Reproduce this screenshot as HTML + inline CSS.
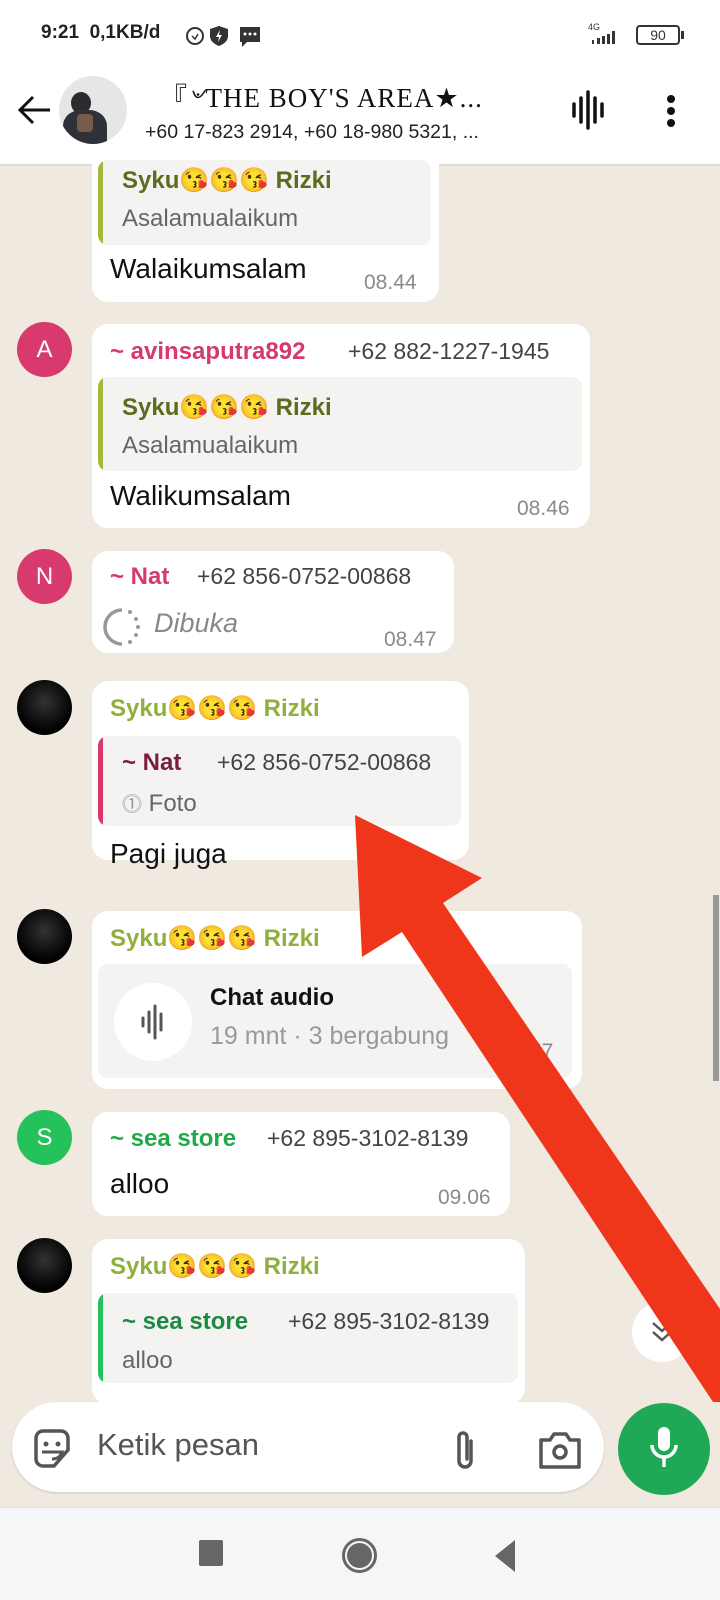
<!DOCTYPE html>
<html><head><meta charset="utf-8"><style>
*{margin:0;padding:0;box-sizing:border-box}
body{width:720px;height:1600px;position:relative;overflow:hidden;background:#efe9e0;font-family:"Liberation Sans","Noto Sans CJK SC",sans-serif;color:#111}
.a{position:absolute}
.b{position:absolute;background:#fff;border-radius:16px}
.q{position:absolute;background:#f5f3f1;border-radius:10px;overflow:hidden}
.q:before{content:"";position:absolute;left:0;top:0;bottom:0;width:5px;background:var(--c)}
.t{position:absolute;font-size:21px;color:#8a8a8a;white-space:nowrap}
.n{position:absolute;font-size:24px;white-space:nowrap}
.av{position:absolute;width:55px;height:55px;border-radius:50%;color:#fff;font-size:24px;text-align:center;line-height:55px}
.dk{background:radial-gradient(circle at 50% 40%,#333 0,#111 45%,#000 70%)}
.m{position:absolute;font-size:28px;white-space:nowrap}
.g{color:#8fb03c}
</style></head><body>
<!-- status bar -->
<div class="a" style="left:0;top:0;width:720px;height:165px;background:#fff"></div>
<div class="a" style="left:41px;top:22px;font-size:19px;font-weight:bold;color:#222">9:21&nbsp; 0,1KB/d</div>
<svg class="a" style="left:183px;top:22px" width="100" height="26"><circle cx="12" cy="14" r="8" fill="none" stroke="#333" stroke-width="2"/><path d="M9 14l3 3 3-5" stroke="#333" fill="none" stroke-width="1.5"/><path d="M36 4l9 3v7c0 5-4 8-9 10-5-2-9-5-9-10V7z" fill="#333"/><path d="M37 8l-4 7h3l-1 5 4-7h-3z" fill="#fff"/><rect x="57" y="5" width="20" height="15" fill="#333"/><path d="M59 20l0 5 5-5z" fill="#333"/><circle cx="62" cy="12" r="1.5" fill="#fff"/><circle cx="67" cy="12" r="1.5" fill="#fff"/><circle cx="72" cy="12" r="1.5" fill="#fff"/></svg>
<div class="a" style="left:588px;top:22px;font-size:9px;color:#333">4G</div>
<svg class="a" style="left:588px;top:30px" width="36" height="16"><path d="M4 14h2v-4h-2zM9 14h3v-6h-3zM14 14h3v-8h-3zM19 14h3v-10h-3zM24 14h3v-13h-3z" fill="#333"/></svg>
<div class="a" style="left:636px;top:25px;width:44px;height:20px;border:2px solid #333;border-radius:4px;font-size:14px;text-align:center;line-height:16px;color:#333">90</div>
<div class="a" style="left:681px;top:31px;width:3px;height:8px;background:#333"></div>
<!-- header -->
<svg class="a" style="left:16px;top:94px" width="36" height="32"><path d="M34 16H4M17 3L4 16l13 13" stroke="#111" stroke-width="3" fill="none"/></svg>
<div class="a" style="left:59px;top:76px;width:68px;height:68px;border-radius:50%;overflow:hidden;background:#e6e6e6">
<div class="a" style="left:12px;top:16px;width:20px;height:22px;border-radius:50%;background:#2b2b30"></div>
<div class="a" style="left:4px;top:34px;width:44px;height:40px;border-radius:40% 40% 0 0;background:#2e3138"></div>
<div class="a" style="left:18px;top:38px;width:16px;height:18px;background:#7a5a48;border-radius:4px"></div>
</div>
<div class="a" style="left:160px;top:76px;font-size:27px;font-family:'Liberation Serif',serif;letter-spacing:1px;color:#111">『৺THE BOY'S AREA★...</div>
<div class="a" style="left:145px;top:121px;font-size:19.5px;color:#222">+60 17-823 2914, +60 18-980 5321, ...</div>
<svg class="a" style="left:570px;top:90px" width="36" height="40"><path d="M4 14v12M11 8v24M18 2v36M25 8v24M32 14v12" stroke="#111" stroke-width="3.5" stroke-linecap="round"/></svg>
<svg class="a" style="left:666px;top:94px" width="10" height="34"><circle cx="5" cy="5" r="4" fill="#111"/><circle cx="5" cy="17" r="4" fill="#111"/><circle cx="5" cy="29" r="4" fill="#111"/></svg>
<div class="a" style="left:0;top:164px;width:720px;height:2px;background:#ddd"></div>
<!-- bubble 1 -->
<div class="b" style="left:92px;top:150px;width:347px;height:152px;border-radius:0 0 16px 16px"></div>
<div class="q" style="left:98px;top:160px;width:333px;height:85px;--c:#a4b83a"></div>
<div class="n" style="left:122px;top:166px;font-weight:bold;color:#5e6a1d">Syku😘😘😘 Rizki</div>
<div class="n" style="left:122px;top:205px;color:#666">Asalamualaikum</div>
<div class="m" style="left:110px;top:253px">Walaikumsalam</div>
<div class="t" style="left:364px;top:271px">08.44</div>
<!-- A -->
<div class="av" style="left:17px;top:322px;background:#d83a6e">A</div>
<div class="b" style="left:92px;top:324px;width:498px;height:204px"></div>
<div class="n" style="left:110px;top:338px;font-weight:bold;color:#d63a6a">~ avinsaputra892</div>
<div class="n" style="left:348px;top:338px;color:#444;font-size:23px">+62 882-1227-1945</div>
<div class="q" style="left:98px;top:377px;width:484px;height:94px;--c:#a4b83a"></div>
<div class="n" style="left:122px;top:393px;font-weight:bold;color:#5e6a1d">Syku😘😘😘 Rizki</div>
<div class="n" style="left:122px;top:432px;color:#666">Asalamualaikum</div>
<div class="m" style="left:110px;top:480px">Walikumsalam</div>
<div class="t" style="left:517px;top:497px">08.46</div>
<!-- N -->
<div class="av" style="left:17px;top:549px;background:#d83a6e">N</div>
<div class="b" style="left:92px;top:551px;width:362px;height:102px"></div>
<div class="n" style="left:110px;top:563px;font-weight:bold;color:#d63a6a">~ Nat</div>
<div class="n" style="left:197px;top:563px;color:#444;font-size:23px">+62 856-0752-00868</div>
<svg class="a" style="left:103px;top:607px" width="40" height="40"><path d="M19 3A17 17 0 0 0 19 37" stroke="#999" stroke-width="3.5" fill="none"/><circle cx="27" cy="5" r="2" fill="#999"/><circle cx="33" cy="12" r="2" fill="#999"/><circle cx="35" cy="20" r="2" fill="#999"/><circle cx="33" cy="28" r="2" fill="#999"/><circle cx="27" cy="35" r="2" fill="#999"/></svg>
<div class="m" style="left:154px;top:608px;font-style:italic;color:#888;font-size:27px">Dibuka</div>
<div class="t" style="left:384px;top:628px">08.47</div>
<!-- Rizki Pagi -->
<div class="av dk" style="left:17px;top:680px"></div>
<div class="b" style="left:92px;top:681px;width:377px;height:179px"></div>
<div class="n" style="left:110px;top:694px;font-weight:bold" ><span class="g">Syku😘😘😘 Rizki</span></div>
<div class="q" style="left:98px;top:736px;width:363px;height:90px;--c:#d63a6a"></div>
<div class="n" style="left:122px;top:749px;font-weight:bold;color:#7a1e3c">~ Nat</div>
<div class="n" style="left:217px;top:749px;color:#444;font-size:23px">+62 856-0752-00868</div>
<div class="n" style="left:122px;top:788px;color:#666"><span style="font-size:20px;color:#999">⓵</span> Foto</div>
<div class="m" style="left:110px;top:838px">Pagi juga</div>
<!-- Chat audio -->
<div class="av dk" style="left:17px;top:909px"></div>
<div class="b" style="left:92px;top:911px;width:490px;height:178px"></div>
<div class="n" style="left:110px;top:924px;font-weight:bold"><span class="g">Syku😘😘😘 Rizki</span></div>
<div class="q" style="left:98px;top:964px;width:474px;height:114px;background:#f5f3f1"></div>
<div class="a" style="left:114px;top:983px;width:78px;height:78px;border-radius:50%;background:#fff"></div>
<svg class="a" style="left:138px;top:1004px" width="30" height="36"><path d="M5 14v8M11 8v20M17 2v32M23 10v16" stroke="#555" stroke-width="3" stroke-linecap="round"/></svg>
<div class="n" style="left:210px;top:984px;font-weight:bold;color:#111">Chat audio</div>
<div class="n" style="left:210px;top:1022px;color:#999;font-size:25px">19 mnt · 3 bergabung</div>
<div class="t" style="left:530px;top:1040px">57</div>
<!-- S -->
<div class="av" style="left:17px;top:1110px;background:#25c15a">S</div>
<div class="b" style="left:92px;top:1112px;width:418px;height:104px"></div>
<div class="n" style="left:110px;top:1125px;font-weight:bold;color:#1faa4a">~ sea store</div>
<div class="n" style="left:267px;top:1125px;color:#444;font-size:23px">+62 895-3102-8139</div>
<div class="m" style="left:110px;top:1168px">alloo</div>
<div class="t" style="left:438px;top:1186px">09.06</div>
<!-- last -->
<div class="av dk" style="left:17px;top:1238px"></div>
<div class="b" style="left:92px;top:1239px;width:433px;height:165px"></div>
<div class="n" style="left:110px;top:1252px;font-weight:bold"><span class="g">Syku😘😘😘 Rizki</span></div>
<div class="q" style="left:98px;top:1293px;width:420px;height:90px;--c:#25c15a"></div>
<div class="n" style="left:122px;top:1308px;font-weight:bold;color:#1d8a42">~ sea store</div>
<div class="n" style="left:288px;top:1308px;color:#444;font-size:23px">+62 895-3102-8139</div>
<div class="n" style="left:122px;top:1347px;color:#666">alloo</div>
<!-- scroll btn, scrollbar -->
<div class="a" style="left:632px;top:1302px;width:60px;height:60px;border-radius:50%;background:#fff"></div>
<svg class="a" style="left:650px;top:1319px" width="24" height="26"><path d="M3 4l9 8 9-8M3 13l9 8 9-8" stroke="#555" stroke-width="2.5" fill="none"/></svg>
<div class="a" style="left:713px;top:895px;width:6px;height:186px;background:#999"></div>
<!-- arrow -->
<svg class="a" style="left:0;top:0" width="720" height="1600"><polygon points="355,815 482,878 443,903 720,1309 720,1402 713,1402 402,932 362,957" fill="#f0361a"/></svg>
<!-- input -->
<div class="a" style="left:12px;top:1402px;width:592px;height:90px;border-radius:45px;background:#fff;box-shadow:0 1px 2px rgba(0,0,0,.15)"></div>
<svg class="a" style="left:32px;top:1428px" width="40" height="42"><path d="M4 10a7 7 0 0 1 7-7h18a7 7 0 0 1 7 7v12L22 38H11a7 7 0 0 1-7-7z" fill="none" stroke="#555" stroke-width="3.5"/><circle cx="14" cy="16" r="2.5" fill="#555"/><circle cx="26" cy="16" r="2.5" fill="#555"/><path d="M10 24h20c-2 5-5 7-10 7" stroke="#555" stroke-width="3" fill="none"/></svg>
<div class="a" style="left:97px;top:1427px;font-size:31px;color:#555">Ketik pesan</div>
<svg class="a" style="left:451px;top:1427px" width="30" height="48"><path d="M20 14v20a6 6 0 0 1-12 0V10a4 4 0 0 1 8 0v22" stroke="#555" stroke-width="3.5" fill="none" stroke-linecap="round"/></svg>
<svg class="a" style="left:538px;top:1430px" width="44" height="40"><path d="M3 10h9l4-6h12l4 6h9v27H3z" fill="none" stroke="#555" stroke-width="3.5" stroke-linejoin="round"/><circle cx="22" cy="22" r="6" fill="none" stroke="#555" stroke-width="3.5"/></svg>
<div class="a" style="left:618px;top:1403px;width:92px;height:92px;border-radius:50%;background:#1fa855"></div>
<svg class="a" style="left:648px;top:1425px" width="32" height="50"><rect x="10" y="2" width="12" height="24" rx="6" fill="#fff"/><path d="M4 20a12 12 0 0 0 24 0M16 32v10" stroke="#fff" stroke-width="3.5" fill="none"/></svg>
<!-- nav -->
<div class="a" style="left:0;top:1507px;width:720px;height:93px;background:#f5f6f8;border-top:1px solid #e4e4e4"></div>
<div class="a" style="left:199px;top:1540px;width:24px;height:26px;background:#666;border-radius:2px"></div>
<div class="a" style="left:342px;top:1538px;width:35px;height:35px;border-radius:50%;border:3px solid #666"></div>
<div class="a" style="left:347px;top:1543px;width:25px;height:25px;border-radius:50%;background:#666"></div>
<svg class="a" style="left:493px;top:1538px" width="24" height="36"><path d="M22 2v32L2 18z" fill="#666"/></svg>
</body></html>
